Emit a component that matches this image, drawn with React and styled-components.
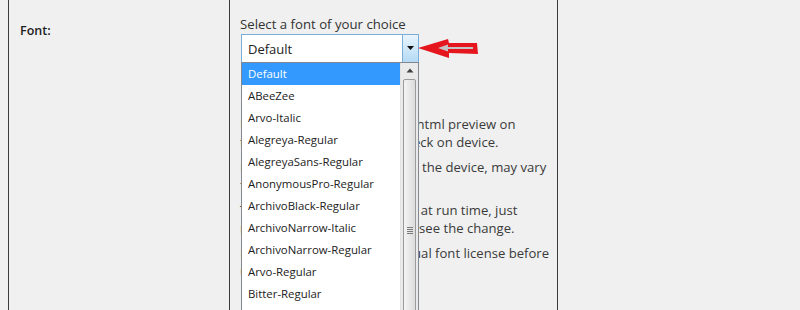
import styled, { createGlobalStyle } from 'styled-components'

const fonts = [
  'Default',
  'ABeeZee',
  'Arvo-Italic',
  'Alegreya-Regular',
  'AlegreyaSans-Regular',
  'AnonymousPro-Regular',
  'ArchivoBlack-Regular',
  'ArchivoNarrow-Italic',
  'ArchivoNarrow-Regular',
  'Arvo-Regular',
  'Bitter-Regular',
  'Cabin-Regular',
]

const notes = [
  ['Font will not be visible in the html preview on', 'the web browsers, please check on device.'],
  ['Font appearance depends on the device, may vary', 'from device to device.'],
  ['The fonts will be applied only at run time, just', 'rebuild and install the app to see the change.'],
  ['Please also check the individual font license before', 'using it in your app.'],
]

const GlobalStyle = createGlobalStyle`
  body {
    margin: 0 0 0 8px;
    background: #f0f0f0;
    overflow: hidden;
    font-family: 'Open Sans', 'Noto Sans', sans-serif;
    color: #262626;
  }
`

const Table = styled.div`
  display: grid;
  grid-template-columns: 221px 328px 1fr;
  height: 310px;
  border-left: 1px solid #3c3c3c;
`

const Cell = styled.div`
  border-right: ${(p) => (p.$last ? 'none' : '1px solid #3c3c3c')};
  padding: ${(p) => p.$pad || '0'};
  position: relative;
`

const Label = styled.div`
  font-size: 12.5px;
  font-weight: 600;
  color: #1e1e1e;
`

const Caption = styled.div`
  font-size: 13.2px;
  line-height: 16px;
  color: #333;
  margin-bottom: 2px;
`

const SelectWrap = styled.div`
  position: relative;
  width: 178px;
  margin-left: 1px;
`

const SelectBox = styled.div`
  height: 27px;
  border: 1px solid #7aaed8;
  background: #fff;
  display: flex;
  align-items: center;
  font-size: 13px;
  color: #222;
  padding-left: 6px;
  width: 170px;
`

const SelectValue = styled.span`
  flex: 1;
`

const ArrowButton = styled.div`
  width: 15px;
  height: 27px;
  border-left: 1px solid #7aaed8;
  background: linear-gradient(#e9f5fd, #b4daf5);
  display: flex;
  align-items: center;
  justify-content: center;
`

const Dropdown = styled.div`
  position: absolute;
  top: 28px;
  left: 0;
  width: 176px;
  height: 320px;
  border: 1px solid #828790;
  background: #fff;
  display: flex;
  z-index: 2;
`

const List = styled.ul`
  list-style: none;
  margin: 0;
  padding: 0;
  flex: 1;
`

const Item = styled.li`
  height: 22px;
  line-height: 22px;
  padding-left: 6px;
  font-size: 11.4px;
  color: ${(p) => (p.$active ? '#fff' : '#222')};
  background: ${(p) => (p.$active ? '#3399ff' : 'transparent')};
`

const Scrollbar = styled.div`
  width: 17px;
  background: #eaeaea;
  border-left: 1px solid #e3e3e3;
  display: flex;
  flex-direction: column;
  align-items: center;
`

const ScrollUp = styled.div`
  height: 16px;
  width: 100%;
  display: flex;
  align-items: center;
  justify-content: center;
`

const Thumb = styled.div`
  width: 13px;
  height: 326px;
  margin-top: 1px;
  border: 1px solid #9a9a9a;
  border-radius: 2px;
  box-sizing: border-box;
  background: linear-gradient(90deg, #f4f4f4, #dcdcdc);
  display: flex;
  align-items: center;
  justify-content: center;
`

const Grip = styled.div`
  width: 6px;
  height: 7px;
  background: repeating-linear-gradient(#7a7a7a 0 1px, transparent 1px 2px);
`

const Notes = styled.div`
  margin-top: 52px;
  font-size: 13.1px;
  color: #3a3a3a;
`

const Note = styled.p`
  margin: 0 0 7px;
  line-height: 18px;
  white-space: nowrap;
`

const Pointer = styled.svg`
  position: absolute;
  left: 188px;
  top: 38px;
`

export default function App() {
  return (
    <>
      <GlobalStyle />
      <Table>
        <Cell $pad='22px 0 0 11px'>
          <Label>Font:</Label>
        </Cell>
        <Cell $pad='16px 0 0 10px'>
          <Caption>Select a font of your choice</Caption>
          <SelectWrap>
            <SelectBox>
              <SelectValue>Default</SelectValue>
              <ArrowButton>
                <svg width='8' height='5' viewBox='0 0 8 5'>
                  <path d='M0 0H7L3.5 4Z' fill='#111' />
                </svg>
              </ArrowButton>
            </SelectBox>
            <Dropdown>
              <List>
                {fonts.map((f, i) => (
                  <Item key={f} $active={i === 0}>
                    {f}
                  </Item>
                ))}
              </List>
              <Scrollbar>
                <ScrollUp>
                  <svg width='8' height='5' viewBox='0 0 8 5'>
                    <path d='M0.5 4.5H7.5L4 0.5Z' fill='#404040' />
                  </svg>
                </ScrollUp>
                <Thumb>
                  <Grip />
                </Thumb>
              </Scrollbar>
            </Dropdown>
          </SelectWrap>
          <Notes>
            {notes.map((n, i) => (
              <Note key={i}>
                {n[0]}
                <br />
                {n[1]}
              </Note>
            ))}
          </Notes>
          <Pointer width='62' height='21' viewBox='0 0 62 21'>
            <path d='M0 10L30 1L31 5L59 5L60 16L31 15L31 20Z' fill='#e5161d' />
            <path d='M20 10L30 6.5L30 9L55 9L55 11L30 11L30 13.5Z' fill='#c4c4c4' />
          </Pointer>
        </Cell>
        <Cell $last />
      </Table>
    </>
  )
}
